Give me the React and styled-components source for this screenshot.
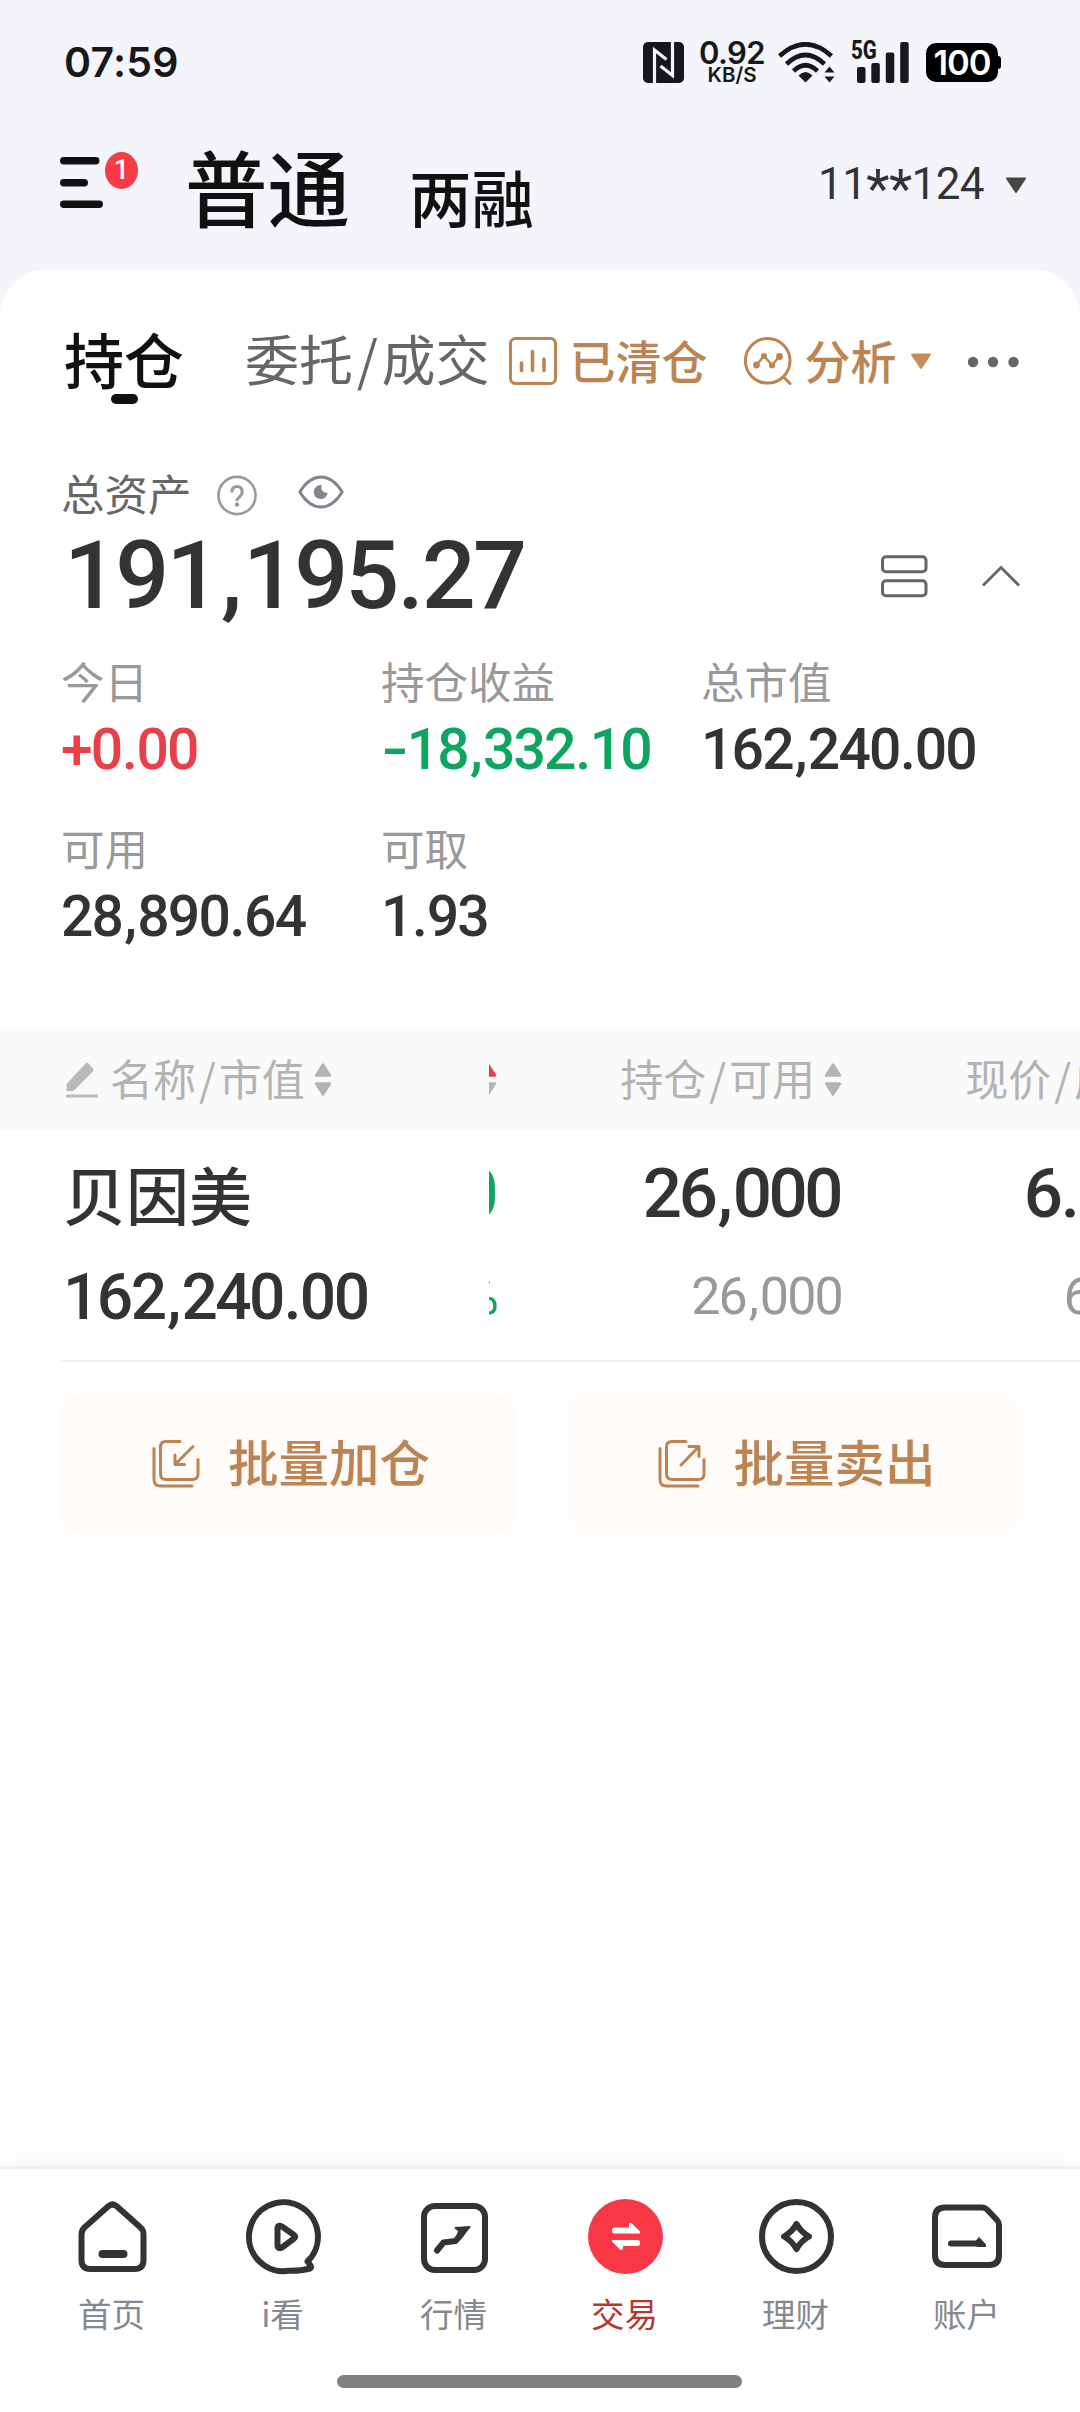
import React from "react";
import styled, { createGlobalStyle, css } from "styled-components";

const Global = createGlobalStyle`
  * { box-sizing: border-box; }
  body { margin: 0; background: #f4f5fa; }
  svg { display: block; flex: none; }
`;

const CJK = `"Noto Sans CJK SC", sans-serif`;
const NUM = `Roboto, "Liberation Sans", sans-serif`;
const SYS = `Inter, "Liberation Sans", sans-serif`;

const BRONZE = "#bc8452";
const RED = "#e93f49";
const GREEN = "#0da55f";

const Screen = styled.div`
  width: 1080px;
  height: 2412px;
  display: flex;
  flex-direction: column;
  background: #f4f5fa;
  overflow: hidden;
  white-space: nowrap;
`;

/* CJK glyphs sit low in their line box; the padding centres them optically */
const han = css`
  font-family: ${CJK};
  line-height: 1;
  padding-bottom: 0.112em;
`;

/* ---------- status bar ---------- */
const StatusBar = styled.div`
  height: 124px;
  padding: 0 79px 0 64px;
  display: flex;
  align-items: center;
  font-family: ${SYS};
  font-weight: 600;
  color: #171819;
`;
const Clock = styled.div`
  font-size: 41px;
  line-height: 1;
  letter-spacing: 0.2px;
  margin-right: auto;
`;
const NetSpeed = styled.div`
  width: 66px;
  margin: 0 13px 0 15px;
  display: flex;
  flex-direction: column;
  align-items: center;
  line-height: 1;
`;
const SpeedValue = styled.span`
  font-size: 31px;
  line-height: 23px;
  letter-spacing: -0.6px;
`;
const SpeedUnit = styled.span`
  font-size: 20.5px;
  line-height: 17px;
  margin-top: 2px;
  letter-spacing: 0;
`;
const Cellular = styled.div`
  position: relative;
  margin: 0 17px 0 16px;
`;
const Generation = styled.span`
  position: absolute;
  left: 0;
  top: -1px;
  font-family: ${NUM};
  font-weight: 800;
  font-size: 25px;
  line-height: 20px;
  transform: scaleX(0.82);
  transform-origin: left;
`;
const Battery = styled.div`
  display: flex;
  align-items: center;
`;
const BatteryBody = styled.div`
  width: 72px;
  height: 39px;
  border-radius: 10px;
  background: #000;
  color: #fff;
  font-size: 34.5px;
  letter-spacing: -1px;
  line-height: 39px;
  text-align: center;
`;
const BatteryTip = styled.div`
  width: 3px;
  height: 13px;
  background: #000;
  border-radius: 0 3px 3px 0;
`;

/* ---------- header ---------- */
const Header = styled.header`
  height: 145px;
  padding: 0 53px 0 60px;
  display: flex;
  align-items: flex-start;
`;
const MenuButton = styled.div`
  display: flex;
  padding-top: 28px;
  width: 125px;
`;
const MenuIcon = styled.svg`
  margin-top: 5px;
`;
const Badge = styled.span`
  width: 33px;
  height: 37px;
  margin-left: 2px;
  border-radius: 50%;
  background: #f63b47;
  color: #fff;
  font: 500 27px/37px ${NUM};
  text-align: center;
`;
const AccountKind = styled.div`
  ${han}
  color: #111;
  font-weight: 500;
  font-size: ${(p) => (p.$active ? 82.5 : 62.5)}px;
  margin-top: ${(p) => (p.$active ? 20 : 41)}px;
  margin-right: 59px;
`;
const Account = styled.div`
  margin: 38px 0 0 auto;
  display: flex;
  align-items: center;
  font: 400 44px/44px ${NUM};
  letter-spacing: -0.6px;
  color: #333;
`;
const Mask = styled.span`
  font-size: 54px;
  line-height: 44px;
  height: 44px;
  padding-top: 5px;
`;
const AccountArrow = styled.svg`
  margin: 2px 0 0 21px;
`;

/* ---------- card ---------- */
const Card = styled.main`
  flex: 1;
  min-height: 0;
  background: #fff;
  border-radius: 48px 48px 0 0;
`;
const Tabs = styled.div`
  height: 185px;
  padding: 0 61px 0 64px;
  display: flex;
  align-items: center;
`;
const Tab = styled.div`
  ${han}
  position: relative;
  font-size: ${(p) => (p.$active ? 60 : 54)}px;
  font-weight: ${(p) => (p.$active ? 500 : 400)};
  color: ${(p) => (p.$active ? "#111" : "#666")};
  margin-right: ${(p) => (p.$active ? 61 : 0)}px;
  ${(p) =>
    p.$active &&
    css`
      &::after {
        content: "";
        position: absolute;
        left: 47px;
        bottom: -9px;
        width: 27px;
        height: 10px;
        border-radius: 5px;
        background: #111;
      }
    `}
`;
const Slash = styled.span`
  padding: 0 0.068em;
`;
const Tool = styled.div`
  display: flex;
  align-items: center;
  gap: 13px;
  margin-left: ${(p) => p.$gap}px;
`;
const ToolLabel = styled.span`
  ${han}
  font-size: 46px;
  font-weight: 500;
  color: ${BRONZE};
`;
const MoreIcon = styled.svg`
  margin-left: auto;
`;

const AssetLabelRow = styled.div`
  height: 82px;
  padding-left: 61px;
  display: flex;
  align-items: center;
`;
const AssetLabel = styled.span`
  ${han}
  font-size: 43.5px;
  color: #666;
  margin-right: 25px;
`;
const EyeIcon = styled.svg`
  margin: 0 0 6px 41px;
`;
const TotalRow = styled.div`
  height: 80px;
  padding: 0 59px 0 64px;
  display: flex;
  align-items: center;
`;
const Total = styled.div`
  font: 500 95px/80px ${NUM};
  letter-spacing: -0.029em;
  color: #333;
  margin-right: auto;
`;
const ChevronIcon = styled.svg`
  margin-left: 53px;
`;
const Point = styled.span`
  display: inline-block;
  width: 0.265em;
  text-align: center;
`;
const Minus = styled.span`
  display: inline-block;
  width: 0.45em;
  text-align: center;
  transform: scaleX(1.35);
`;

const Metrics = styled.div`
  margin: 43px 0 37px 61px;
  height: 333px;
  display: grid;
  grid-template-columns: repeat(3, 320px);
  grid-auto-rows: 166.5px;
`;
const MetricLabel = styled.div`
  ${han}
  font-size: 43.5px;
  color: #999;
`;
const MetricValue = styled.div`
  margin-top: 14px;
  font: 500 57px/57px ${NUM};
  letter-spacing: -0.032em;
  color: ${(p) => p.$color || "#333"};
`;

/* ---------- holdings table ---------- */
const HeadRow = styled.div`
  height: 101px;
  padding-left: 61px;
  display: flex;
  background: #fafafa;
`;
const HeadName = styled.div`
  width: 428px;
  flex: none;
  display: flex;
  align-items: center;
`;
const HeadLabel = styled.span`
  ${han}
  font-size: 43px;
  color: #b3b3b3;
`;
const PencilIcon = styled.svg`
  margin: 0 12px 0 5px;
`;
const SortIcon = styled.svg`
  margin-left: 9px;
`;
const Scroller = styled.div`
  flex: 1;
  min-width: 0;
  overflow: hidden;
  display: flex;
`;
const HeadCell = styled.div`
  width: ${(p) => (p.$peek ? 8 : 345)}px;
  flex: none;
  overflow: hidden;
  display: flex;
  align-items: center;
  justify-content: flex-end;
`;
const HoldingRow = styled.div`
  height: 232px;
  margin-left: 61px;
  display: flex;
  border-bottom: 2px solid #ededed;
`;
const NameCell = styled.div`
  width: 428px;
  flex: none;
  padding: 27px 0 0 2px;
`;
const StockName = styled.div`
  ${han}
  height: 74px;
  padding-top: 4px;
  font-size: 63px;
  font-weight: 500;
  color: #333;
`;
const StockValue = styled.div`
  margin-top: 29px;
  font: 500 64px/75px ${NUM};
  letter-spacing: -0.04em;
  color: #333;
`;
const DataCell = styled.div`
  width: ${(p) => (p.$peek ? 8 : 345)}px;
  flex: none;
  overflow: hidden;
  padding: 27px 0 0;
  display: flex;
  flex-direction: column;
  align-items: flex-end;
  font-family: ${NUM};
`;
const Primary = styled.div`
  font-size: 69px;
  font-weight: 500;
  line-height: 74px;
  letter-spacing: -0.05em;
  padding-right: 2px;
  color: ${(p) => p.$color || "#333"};
`;
const Secondary = styled.div`
  margin-top: 29px;
  font-size: 52px;
  line-height: 74px;
  letter-spacing: -0.035em;
  color: ${(p) => p.$color || "#999"};
`;

/* ---------- batch buttons ---------- */
const Actions = styled.div`
  padding: 34px 61px 0;
  display: flex;
  gap: 53px;
`;
const ActionButton = styled.div`
  flex: 1;
  height: 135px;
  padding-left: 91px;
  display: flex;
  align-items: center;
  gap: 27px;
  border-radius: 14px;
  background: #fffbf8;
`;
const ActionLabel = styled.span`
  ${han}
  font-size: 50.5px;
  font-weight: 500;
  color: ${BRONZE};
`;

/* ---------- bottom navigation ---------- */
const Nav = styled.nav`
  height: 246px;
  padding: 30px 28px 0 26px;
  display: grid;
  grid-template-columns: repeat(6, 171px);
  grid-template-rows: 176px 13px;
  background: #fff;
  border-top: 3px solid #efefef;
  box-shadow: 0 0 36px rgba(0, 0, 0, 0.05);
  z-index: 1;
`;
const NavItem = styled.div`
  display: flex;
  flex-direction: column;
  align-items: center;
`;
const NavIcon = styled.svg`
  overflow: visible;
  margin-left: 2px;
`;
const NavLabel = styled.span`
  ${han}
  margin-top: 22px;
  font-size: 33.5px;
  color: ${(p) => (p.$active ? "#b9362f" : "#84888f")};
`;
const HomeIndicator = styled.div`
  grid-column: 1 / -1;
  justify-self: center;
  width: 405px;
  height: 13px;
  border-radius: 7px;
  background: #808080;
`;

const Figure = ({ children }) =>
  children.split(/([,.-])/).map((part, i) => {
    if (part === "-") return <Minus key={i}>{part}</Minus>;
    if (part === "," || part === ".") return <Point key={i}>{part}</Point>;
    return part;
  });

const Pair = ({ a, b }) => (
  <>
    {a}
    <Slash>/</Slash>
    {b}
  </>
);

const Sort = ({ up = "#b3b3b3" }) => (
  <SortIcon width="18" height="33" viewBox="0 0 18 33">
    <path d="M9 1.5 16 12.500H2Z" fill={up} stroke={up} strokeWidth="2.400" strokeLinejoin="round" />
    <path d="M9 31.5 16 20.500H2Z" fill="#b3b3b3" stroke="#b3b3b3" strokeWidth="2.400" strokeLinejoin="round" />
  </SortIcon>
);

const BatchIcon = ({ out }) => (
  <svg width="49" height="50" viewBox="0 0 49 50" fill="none" stroke={BRONZE} strokeWidth="3" strokeLinecap="round" strokeLinejoin="round">
    <path d="M28 2.5H14q-5.500 0-5.500 5.500V35q0 5.500 5.500 5.500h26.500q5.500 0 5.500-5.500V20.500" />
    <path d="M2 9.500v31q0 6.500 6.500 6.500H40" />
    {out ? <path d="M23 26 41 7.500M31 7.500h10V17.500" /> : <path d="M41 7.500 23 25.500M23 16v9.500h9.500" />}
  </svg>
);

const stroke = { fill: "none", stroke: "#333", strokeWidth: 6, strokeLinejoin: "round", strokeLinecap: "round" };

const NAV = [
  {
    label: "首页",
    icon: (
      <>
        <path {...stroke} d="M33 7.500q4.500-4 9 0L65 28q3.500 3 3.500 7V61q0 9-9 9h-44q-9 0-9-9V35q0-4 3.500-7Z" />
        <path {...stroke} strokeWidth="8" d="M27.500 55h21" />
      </>
    ),
  },
  {
    label: "i看",
    icon: (
      <g transform="translate(1 0)">
        <path {...stroke} d="M60.500 62.500A34.500 34.500 0 1 0 42 71.800Q54 72 63 69.500q2-1 .5-3Z" />
        <path {...stroke} d="M30.500 30q0-5 4.500-2.500L47 36q2.500 1.800 0 3.500L35 48.500q-4.500 2-4.500-2.500Z" />
      </g>
    ),
  },
  {
    label: "行情",
    icon: (
      <>
        <rect {...stroke} x="7" y="7" width="61" height="64" rx="11" />
        <path {...stroke} d="M20 51.500 26.500 43.500 38.500 42 44.500 35" />
        <path d="M38.500 29 52.500 28 43 40 40.500 36 42.500 32Z" fill="#333" stroke="#333" strokeWidth="2" strokeLinejoin="round" />
      </>
    ),
  },
  {
    label: "交易",
    active: true,
    icon: (
      <>
        <circle cx="37.500" cy="37.500" r="37.500" fill="#f83945" />
        <path d="M26.500 28.500H41V24.500q1.500-1.500 3 0L52 32.500v2H26.500q-2.500 0-2.500-3t2.500-3ZM49.500 41q2.500 0 2.500 3t-2.500 3H35v2q-.5 3-3 1.500L24 42.500V41Z" fill="#fff" />
      </>
    ),
  },
  {
    label: "理财",
    icon: (
      <>
        <circle {...stroke} cx="37.500" cy="37.500" r="34.500" />
        <path {...stroke} d="M37.500 25Q42 33 50 37.500 42 42 37.500 50 33 42 25 37.500 33 33 37.500 25Z" />
      </>
    ),
  },
  {
    label: "账户",
    icon: (
      <g transform="translate(-1 0)">
        <path {...stroke} d="M16 8.500H53Q56 8.500 58 10.500L68 21q2 2 2 5V56q0 10-10 10H16Q6 66 6 56V18.500q0-10 10-10Z" />
        <path {...stroke} d="M22 44.500H50" />
        <path d="M47 42 50 38.500 56.500 45.500V47.500H48Z" fill="#333" stroke="#333" strokeWidth="1" strokeLinejoin="round" />
      </g>
    ),
  },
];

const METRICS = [
  ["今日", "+0.00", RED],
  ["持仓收益", "-18,332.10", GREEN],
  ["总市值", "162,240.00"],
  ["可用", "28,890.64"],
  ["可取", "1.93"],
];

export default function App() {
  return (
    <Screen>
      <Global />
      <StatusBar>
        <Clock>07:59</Clock>
        <svg width="41" height="41" viewBox="0 0 41 41">
          <rect width="41" height="41" rx="5" fill="#171819" />
          <path d="M11.500 41V8L23.500 17.500M29.500 0V33.500L17.500 24" fill="none" stroke="#f4f5fa" strokeWidth="3.200" />
        </svg>
        <NetSpeed>
          <SpeedValue>0.92</SpeedValue>
          <SpeedUnit>KB/S</SpeedUnit>
        </NetSpeed>
        <svg width="57" height="41" viewBox="0 0 57 41" fill="none" stroke="#171819" strokeWidth="4.600">
          <path d="M1.500 14Q27.500-9.500 53.500 14M8.500 22Q27.500 4 46.500 22M15.500 29Q27.500 17.500 39.500 29" />
          <path d="M20.500 33.500Q27.500 26.500 34.500 33.500L27.500 40.500Z" fill="#171819" stroke="none" />
          <path d="M46.500 30.500 51.500 24.500 56.500 30.500ZM46.500 34.500 51.500 40.500 56.500 34.500Z" fill="#171819" stroke="none" />
        </svg>
        <Cellular>
          <svg width="58" height="41" viewBox="0 0 58 41" fill="#171819">
            <rect x="6" y="25" width="8.500" height="16" rx="2" />
            <rect x="20.300" y="21" width="8.500" height="20" rx="2" />
            <rect x="34.800" y="10.500" width="8.500" height="30.500" rx="2" />
            <rect x="49.200" y="0" width="8.500" height="41" rx="2" />
          </svg>
          <Generation>5G</Generation>
        </Cellular>
        <Battery>
          <BatteryBody>100</BatteryBody>
          <BatteryTip />
        </Battery>
      </StatusBar>

      <Header>
        <MenuButton>
          <MenuIcon width="43" height="51" viewBox="0 0 43 51" fill="#111">
            <rect width="39.500" height="7.400" rx="3.700" />
            <rect y="22" width="28" height="7.400" rx="3.700" />
            <rect y="43.600" width="43" height="7.400" rx="3.700" />
          </MenuIcon>
          <Badge>1</Badge>
        </MenuButton>
        <AccountKind $active>普通</AccountKind>
        <AccountKind>两融</AccountKind>
        <Account>
          11<Mask>**</Mask>124
          <AccountArrow width="22" height="17" viewBox="0 0 22 17">
            <path d="M2 1.500H20L11 15Z" fill="#474747" stroke="#474747" strokeWidth="2" strokeLinejoin="round" />
          </AccountArrow>
        </Account>
      </Header>

      <Card>
        <Tabs>
          <Tab $active>持仓</Tab>
          <Tab>
            <Pair a="委托" b="成交" />
          </Tab>
          <Tool $gap={19}>
            <svg width="48" height="48" viewBox="0 0 48 48" fill="none" stroke={BRONZE} strokeWidth="3" strokeLinecap="round">
              <rect x="1.500" y="1.500" width="45" height="45" rx="5" />
              <path strokeWidth="3.600" d="M12.500 26v7.500M23.500 14.500v19M35 22v11.500" />
            </svg>
            <ToolLabel>已清仓</ToolLabel>
          </Tool>
          <Tool $gap={36}>
            <svg width="48" height="48" viewBox="0 0 48 48" fill="none" stroke={BRONZE} strokeWidth="3" strokeLinecap="round">
              <circle cx="23.700" cy="23.800" r="22.300" />
              <path d="M40 40.500 46 46.500" />
              <path strokeWidth="2.400" d="M12.500 28 20 19 28 28 35.500 19.500" />
              <g fill={BRONZE} stroke="none">
                <circle cx="12.500" cy="28" r="3.400" />
                <circle cx="20" cy="19" r="3" />
                <circle cx="28" cy="28.500" r="3" />
                <circle cx="35.500" cy="19.500" r="3.400" />
              </g>
            </svg>
            <ToolLabel>分析</ToolLabel>
            <svg width="22" height="17" viewBox="0 0 22 17">
              <path d="M2 1.500H20L11 15Z" fill="#c68d5a" stroke="#c68d5a" strokeWidth="2" strokeLinejoin="round" />
            </svg>
          </Tool>
          <MoreIcon width="52" height="12" viewBox="0 0 52 12" fill="#666">
            <circle cx="6" cy="6" r="5.200" />
            <circle cx="26" cy="6" r="5.200" />
            <circle cx="46.500" cy="6" r="5.200" />
          </MoreIcon>
        </Tabs>

        <AssetLabelRow>
          <AssetLabel>总资产</AssetLabel>
          <svg width="40" height="41" viewBox="0 0 40 41" fill="none" stroke="#999" strokeWidth="2.600">
            <circle cx="20" cy="20.500" r="18.600" />
            <path strokeWidth="3" d="M14.800 17.500q0-6 5.200-6t5.200 5.500q0 2.500-2.700 4.800T20 26" />
            <circle cx="20" cy="29.500" r="2.200" fill="#999" stroke="none" />
          </svg>
          <EyeIcon width="46" height="34" viewBox="0 0 46 34" fill="none" stroke="#84868f" strokeWidth="3">
            <path strokeLinejoin="round" d="M1.800 17Q11 2 23 2T44.200 17Q35 32 23 32T1.800 17Z" />
            <path d="M24 10.200A7 7 0 1 0 29.700 17.500 5 5 0 0 1 24 10.200Z" fill="#84868f" stroke="none" />
          </EyeIcon>
        </AssetLabelRow>
        <TotalRow>
          <Total>
            <Figure>191,195.27</Figure>
          </Total>
          <svg width="47" height="43" viewBox="0 0 47 43" fill="none" stroke="#666" strokeWidth="3">
            <rect x="1.500" y="1.800" width="43.500" height="15" rx="3.500" />
            <rect x="1.500" y="25.800" width="43.500" height="15" rx="3.500" />
          </svg>
          <ChevronIcon width="40" height="22" viewBox="0 0 40 22" fill="none" stroke="#666" strokeWidth="2.800">
            <path d="M2 20.500 20 2.500 38 20.500" />
          </ChevronIcon>
        </TotalRow>

        <Metrics>
          {METRICS.map(([label, value, color]) => (
            <div key={label}>
              <MetricLabel>{label}</MetricLabel>
              <MetricValue $color={color}>
                <Figure>{value}</Figure>
              </MetricValue>
            </div>
          ))}
        </Metrics>

        <HeadRow>
          <HeadName>
            <PencilIcon width="32" height="36" viewBox="0 0 32 36" fill="#b9b9b9">
              <path d="M.5 29V22L19.500 1.500Q21 0 22.500 1.500L27 6.500Q28 8 27 9.500L9 27.500Q7.500 29 5.500 29Z" />
              <rect y="32.500" width="32" height="3" rx="1" />
            </PencilIcon>
            <HeadLabel>
              <Pair a="名称" b="市值" />
            </HeadLabel>
            <Sort />
          </HeadName>
          <Scroller>
            <HeadCell $peek>
              <Sort up="#ee3b45" />
            </HeadCell>
            <HeadCell>
              <HeadLabel>
                <Pair a="持仓" b="可用" />
              </HeadLabel>
              <Sort />
            </HeadCell>
            <HeadCell>
              <HeadLabel>
                <Pair a="现价" b="成本" />
              </HeadLabel>
              <Sort />
            </HeadCell>
          </Scroller>
        </HeadRow>
        <HoldingRow>
          <NameCell>
            <StockName>贝因美</StockName>
            <StockValue>
              <Figure>162,240.00</Figure>
            </StockValue>
          </NameCell>
          <Scroller>
            <DataCell $peek>
              <Primary $color={GREEN}>0</Primary>
              <Secondary $color={GREEN}>%</Secondary>
            </DataCell>
            <DataCell>
              <Primary>
                <Figure>26,000</Figure>
              </Primary>
              <Secondary>
                <Figure>26,000</Figure>
              </Secondary>
            </DataCell>
            <DataCell>
              <Primary>
                <Figure>6.240</Figure>
              </Primary>
              <Secondary>
                <Figure>6.945</Figure>
              </Secondary>
            </DataCell>
          </Scroller>
        </HoldingRow>

        <Actions>
          <ActionButton>
            <BatchIcon />
            <ActionLabel>批量加仓</ActionLabel>
          </ActionButton>
          <ActionButton>
            <BatchIcon out />
            <ActionLabel>批量卖出</ActionLabel>
          </ActionButton>
        </Actions>
      </Card>

      <Nav>
        {NAV.map(({ label, icon, active }) => (
          <NavItem key={label}>
            <NavIcon width="75" height="75" viewBox="0 0 75 75">
              {icon}
            </NavIcon>
            <NavLabel $active={active}>{label}</NavLabel>
          </NavItem>
        ))}
        <HomeIndicator />
      </Nav>
    </Screen>
  );
}
